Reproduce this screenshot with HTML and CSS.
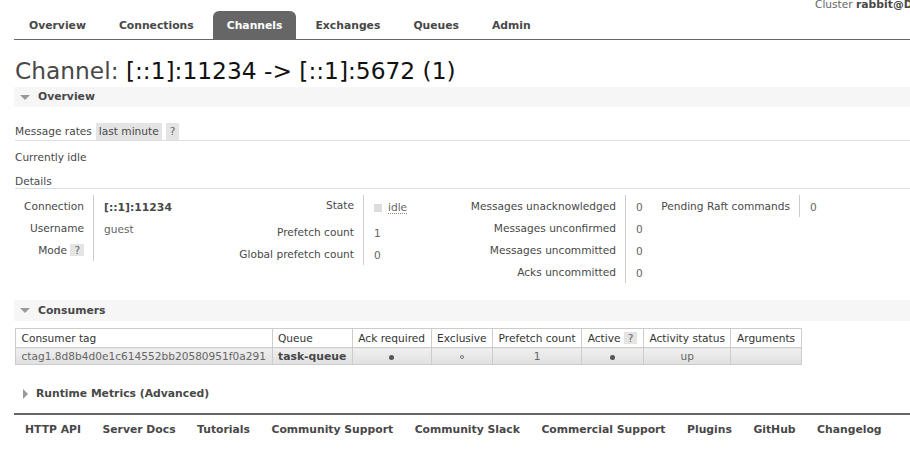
FILE: index.html
```html
<!DOCTYPE html>
<html>
<head>
<meta charset="utf-8">
<link rel="stylesheet" href="styles.css">
</head>
<body>
<div class="page">
  <div class="cluster">Cluster <b>rabbit@D</b></div>
  <ul class="tabs">
    <li>Overview</li>
    <li>Connections</li>
    <li class="active">Channels</li>
    <li>Exchanges</li>
    <li>Queues</li>
    <li>Admin</li>
  </ul>

  <h1 class="title">Channel: <span class="name">[::1]:11234 -&gt; [::1]:5672 (1)</span></h1>

  <div class="section-head"><span class="tri-down"></span>Overview</div>

  <div class="rates"><span>Message rates</span><span class="chip">last minute</span><span class="chip q">?</span></div>
  <div class="plain">Currently idle</div>
  <div class="subhead">Details</div>

  <div class="details">
    <table class="facts g1">
      <tr><th>Connection</th><td><b class="strong">[::1]:11234</b></td></tr>
      <tr><th>Username</th><td>guest</td></tr>
      <tr><th>Mode <span class="chip q">?</span></th><td></td></tr>
    </table>
    <table class="facts g2">
      <tr class="tall"><th>State</th><td><span class="state"><span class="sq"></span><span class="idle">idle</span></span></td></tr>
      <tr><th>Prefetch count</th><td>1</td></tr>
      <tr><th>Global prefetch count</th><td>0</td></tr>
    </table>
    <table class="facts g3">
      <tr><th>Messages unacknowledged</th><td>0</td></tr>
      <tr><th>Messages unconfirmed</th><td>0</td></tr>
      <tr><th>Messages uncommitted</th><td>0</td></tr>
      <tr><th>Acks uncommitted</th><td>0</td></tr>
    </table>
    <table class="facts g4">
      <tr><th>Pending Raft commands</th><td>0</td></tr>
    </table>
  </div>

  <div class="section-head consumers"><span class="tri-down"></span>Consumers</div>

  <table class="list">
    <tr>
      <th>Consumer tag</th>
      <th>Queue</th>
      <th>Ack required</th>
      <th>Exclusive</th>
      <th>Prefetch count</th>
      <th>Active <span class="chip q">?</span></th>
      <th>Activity status</th>
      <th>Arguments</th>
    </tr>
    <tr class="row">
      <td>ctag1.8d8b4d0e1c614552bb20580951f0a291</td>
      <td><b class="strong">task-queue</b></td>
      <td class="c"><span class="dot"></span></td>
      <td class="c"><span class="ring"></span></td>
      <td class="c">1</td>
      <td class="c"><span class="dot"></span></td>
      <td class="c">up</td>
      <td></td>
    </tr>
  </table>

  <div class="collapsed"><span class="tri-right"></span>Runtime Metrics (Advanced)</div>

  <ul class="footer">
    <li>HTTP API</li>
    <li>Server Docs</li>
    <li>Tutorials</li>
    <li>Community Support</li>
    <li>Community Slack</li>
    <li>Commercial Support</li>
    <li>Plugins</li>
    <li>GitHub</li>
    <li>Changelog</li>
  </ul>
</div>
</body>
</html>
```
FILE: styles.css
```css
html, body {
  margin: 0;
  padding: 0;
  background: #fff;
}
body {
  font-family: "DejaVu Sans", Verdana, sans-serif;
  font-size: 10.6px;
  color: #484848;
  overflow: hidden;
}
b, .tabs, .section-head, .collapsed, .footer {
  font-size: 10.8px;
}
.page {
  width: 910px;
}
.cluster {
  height: 11px;
  line-height: 9px;
  padding-left: 815px;
  white-space: nowrap;
  overflow: hidden;
  color: #666;
}
.cluster b {
  color: #484848;
}
.tabs {
  list-style: none;
  margin: 0 0 0 14px;
  padding: 0 0 0 1px;
  display: flex;
  gap: 5px;
  border-bottom: 1px solid #666;
  height: 28px;
}
.tabs li {
  line-height: 26px;
  padding: 2px 14px 0;
  font-weight: bold;
  color: #484848;
  border-radius: 6px 6px 0 0;
}
.tabs li.active {
  background: #666;
  color: #fff;
}
.title {
  margin: 17px 0 2px 15px;
  font-size: 23.3px;
  font-weight: normal;
  line-height: 28px;
  color: #484848;
  white-space: nowrap;
}
.title .name {
  color: #111;
}
.section-head {
  margin-left: 14px;
  height: 20px;
  line-height: 20px;
  background: #f6f6f6;
  font-weight: bold;
  color: #484848;
  display: flex;
  align-items: center;
}
.tri-down {
  width: 0;
  height: 0;
  border-left: 5px solid transparent;
  border-right: 5px solid transparent;
  border-top: 5px solid #999;
  margin: 0 8px 0 6px;
}
.tri-right {
  width: 0;
  height: 0;
  border-top: 5px solid transparent;
  border-bottom: 5px solid transparent;
  border-left: 5px solid #999;
  margin: 0 8px 0 8px;
}
.rates {
  margin: 16px 0 0 15px;
  height: 17px;
  line-height: 17px;
  border-bottom: 1px solid #ddd;
  display: flex;
  gap: 4px;
  white-space: nowrap;
}
.chip {
  background: #e4e4e4;
  padding: 0 3px;
  color: #484848;
}
.chip.q {
  padding: 0 4px;
  color: #666;
}
.plain {
  margin: 9px 0 0 15px;
  line-height: 14px;
}
.subhead {
  margin: 10px 0 0 15px;
  line-height: 14px;
  border-bottom: 1px solid #ddd;
}
.details {
  display: flex;
  margin-top: 6px;
  padding-left: 15px;
  align-items: flex-start;
}
.facts {
  border-collapse: collapse;
}
.facts th {
  font-weight: normal;
  text-align: right;
  padding: 0 9px 0 0;
  height: 22px;
  vertical-align: middle;
  white-space: nowrap;
  color: #484848;
}
.facts td {
  border-left: 1px solid #ccc;
  padding: 2px 0 0 10px;
  vertical-align: middle;
  white-space: nowrap;
  color: #666;
}
.facts tr.tall th {
  vertical-align: top;
  padding-top: 4px;
}
.facts tr.tall td {
  vertical-align: top;
  padding-top: 6px;
  line-height: 13px;
}
.g1 th { width: 69px; }
.g1 td { width: 124px; }
.g2 th { width: 126px; }
.g2 td { width: 86px; }
.g3 th { width: 156px; }
.g3 td { width: 15px; }
.g4 th { width: 139px; }
.g4 td { width: 40px; }
.strong {
  color: #484848;
}
.state {
  display: inline-flex;
  align-items: center;
  gap: 6px;
}
.sq {
  width: 8px;
  height: 8px;
  background: #ddd;
}
.idle {
  border-bottom: 1px dotted #888;
  line-height: 12px;
}
.consumers {
  margin-top: 17px;
  height: 21px;
  line-height: 21px;
}
.list {
  border-collapse: collapse;
  margin: 7px 0 0 15px;
  border: 1px solid #ccc;
}
.list th {
  font-weight: normal;
  text-align: left;
  padding: 0 5.5px;
  height: 18px;
  border: 1px solid #ccc;
  color: #333;
  white-space: nowrap;
  background: #fff;
}
.list td {
  padding: 0 5.5px;
  height: 16px;
  border: 1px solid #ccc;
  white-space: nowrap;
  color: #666;
}
.list tr.row td {
  background: linear-gradient(#f0f0f0, #e0e0e0);
}
.list td.c {
  text-align: center;
}
.dot, .ring {
  display: inline-block;
  width: 5px;
  height: 5px;
  border-radius: 50%;
  vertical-align: middle;
}
.dot { background: #555; }
.ring { border: 1px solid #777; width: 4px; height: 4px; box-sizing: border-box; }
.collapsed {
  margin: 21px 0 0 15px;
  height: 16px;
  line-height: 16px;
  font-weight: bold;
  display: flex;
  align-items: center;
}
.footer {
  list-style: none;
  margin: 11px 0 0 14px;
  padding: 7px 0 0 11px;
  border-top: 2px solid #666;
  display: flex;
  gap: 21.5px;
  font-weight: bold;
  line-height: 16px;
}
```
